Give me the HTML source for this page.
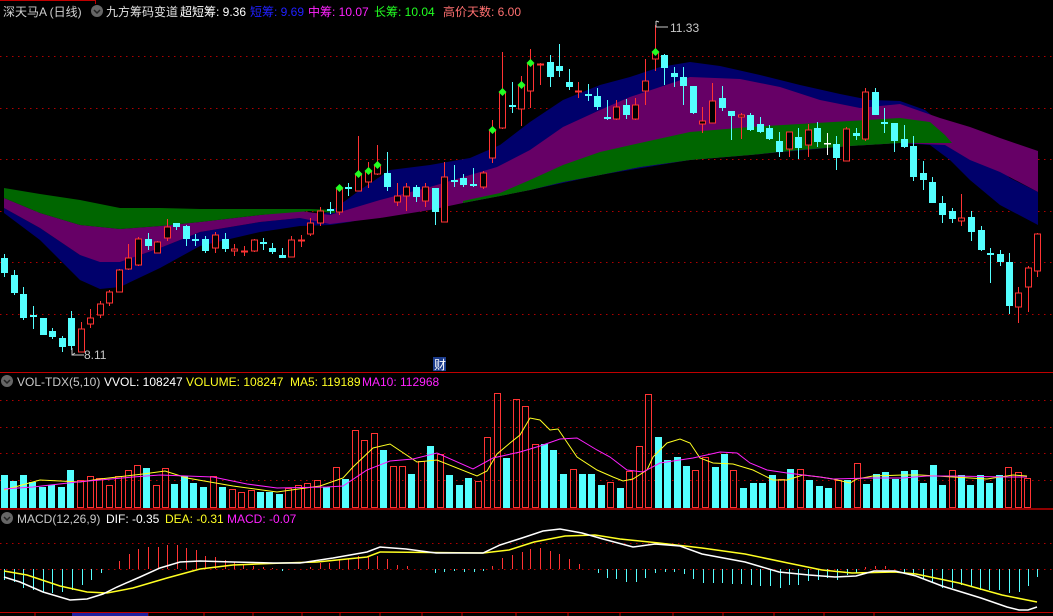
<!DOCTYPE html>
<html><head><meta charset="utf-8"><style>
html,body{margin:0;padding:0;background:#000;width:1053px;height:616px;overflow:hidden}
svg{display:block}
text{font-family:"Liberation Sans","Noto Sans CJK SC",sans-serif;font-size:12px}
</style></head><body>
<svg width="1053" height="616" viewBox="0 0 1053 616" xmlns="http://www.w3.org/2000/svg">
<rect width="1053" height="616" fill="#000"/>
<!-- frame lines -->
<line x1="0" y1="0.5" x2="96" y2="0.5" stroke="#c00000"/>
<line x1="95.5" y1="0" x2="95.5" y2="4" stroke="#c00000"/>
<line x1="0" y1="372.5" x2="1053" y2="372.5" stroke="#c00000"/>
<line x1="0" y1="509" x2="1053" y2="509" stroke="#c00000" stroke-width="1.5"/>
<line x1="0" y1="612.5" x2="1053" y2="612.5" stroke="#c00000"/>
<!-- grid dotted -->
<g stroke="#b00000" stroke-dasharray="1.5 4.5">
<line x1="0" y1="56.5" x2="1053" y2="56.5"/><line x1="0" y1="108.5" x2="1053" y2="108.5"/>
<line x1="0" y1="159.5" x2="1053" y2="159.5"/><line x1="0" y1="211.5" x2="1053" y2="211.5"/>
<line x1="0" y1="262.5" x2="1053" y2="262.5"/><line x1="0" y1="314.5" x2="1053" y2="314.5"/>
<line x1="0" y1="400.5" x2="1053" y2="400.5"/><line x1="0" y1="427.5" x2="1053" y2="427.5"/>
<line x1="0" y1="453.5" x2="1053" y2="453.5"/><line x1="0" y1="480.5" x2="1053" y2="480.5"/>
<line x1="0" y1="543.5" x2="1053" y2="543.5"/><line x1="0" y1="569.5" x2="1053" y2="569.5"/>
</g>
<!-- bands -->
<polygon fill="#00006b" points="4,208 40,228 80,255 120,262 160,248 200,232 260,222 300,218 330,212 360,190 390,170 430,165 470,158 500,145 530,122 563,100 600,85 630,77 660,67 690,62 720,66 760,75 800,85 840,94 870,100 900,101 925,110 950,130 980,152 1010,178 1038,192 1038,225 1000,205 970,180 950,160 930,145 900,143 850,146 750,155 690,160 600,175 530,190 463,203 400,210 350,222 330,225 300,226 260,232 200,246 160,268 120,287 100,289 80,280 40,240 4,213"/>
<polygon fill="#660066" points="4,198 40,213 80,225 120,229 160,226 200,222 260,215 300,211 330,215 380,200 430,187 497,167 530,150 563,127 600,110 630,97 690,77 740,79 780,87 820,100 860,108 900,104 940,118 970,127 1000,138 1038,151 1038,192 1000,172 970,160 945,145 900,143 850,146 800,150 750,155 690,160 640,167 600,175 563,182 530,190 500,196 463,203 430,210 380,218 330,224 300,218 260,222 200,232 160,248 120,262 100,262 80,255 40,228 4,208"/>
<polygon fill="#006600" points="4,188 40,194 80,200 120,208 160,208 200,209 260,209 310,209 335,210 335,213 310,211 260,215 200,222 160,226 120,229 80,225 40,213 4,198"/>
<polygon fill="#006600" points="463,201 500,193 530,180 563,165 600,152 640,143 690,132 750,127 800,124 850,121 900,118 930,122 945,135 952,143 900,143 850,146 800,150 750,155 690,160 640,167 600,175 563,182 530,190 500,196 463,203"/>
<!-- candles -->
<g transform="translate(0.5,0)" shape-rendering="crispEdges">
<path stroke="#54ffff" fill="none" d="M4 254V277M14 270V295M23 287V320M33 306V329M43 318V335M52 328V339M62 336V352M71 311V350M148 233V250M176 223V230M186 225V246M195 234V246M205 236V253M225 233V252M263 238V250M272 243V254M282 248V258M330 202V214M348 183V196M387 152V191M416 185V202M435 188V225M454 165V187M463 174V187M473 168V187M512 82V113M550 55V87M559 44V77M569 69V90M588 84V101M597 88V110M607 100V120M626 99V119M664 54V85M674 67V87M683 67V105M693 86V114M722 86V111M731 111V140M750 113V131M760 117V133M769 125V140M779 132V157M798 128V159M817 122V147M836 136V170M856 128V140M875 88V115M884 108V133M894 125V152M904 125V148M913 136V181M923 161V190M932 177V203M942 196V223M952 208V223M971 211V241M981 226V251M990 248V283M1000 250V266M1009 253V314"/>
<g fill="#54ffff">
<rect x="0.5" y="258" width="7" height="15"/><rect x="10.5" y="275" width="7" height="18"/><rect x="19.5" y="294" width="7" height="24"/><rect x="29.5" y="315" width="7" height="2"/><rect x="39.5" y="318" width="7" height="17"/><rect x="48.5" y="331" width="7" height="6"/><rect x="58.5" y="338" width="7" height="9"/><rect x="67.5" y="318" width="7" height="28"/><rect x="144.5" y="239" width="7" height="7"/><rect x="172.5" y="223" width="7" height="4"/><rect x="182.5" y="226" width="7" height="13"/><rect x="191.5" y="239" width="7" height="2"/><rect x="201.5" y="239" width="7" height="12"/><rect x="221.5" y="239" width="7" height="10"/><rect x="259.5" y="242" width="7" height="2"/><rect x="268.5" y="248" width="7" height="4"/><rect x="278.5" y="255" width="7" height="3"/><rect x="326.5" y="209" width="7" height="2"/><rect x="344.5" y="187" width="7" height="2"/><rect x="383.5" y="173" width="7" height="14"/><rect x="412.5" y="187" width="7" height="10"/><rect x="431.5" y="188" width="7" height="24"/><rect x="450.5" y="180" width="7" height="2"/><rect x="459.5" y="178" width="7" height="7"/><rect x="469.5" y="184" width="7" height="2"/><rect x="508.5" y="105" width="7" height="2"/><rect x="546.5" y="62" width="7" height="15"/><rect x="555.5" y="66" width="7" height="5"/><rect x="565.5" y="82" width="7" height="5"/><rect x="584.5" y="94" width="7" height="2"/><rect x="593.5" y="96" width="7" height="11"/><rect x="603.5" y="117" width="7" height="2"/><rect x="622.5" y="105" width="7" height="10"/><rect x="660.5" y="55" width="7" height="13"/><rect x="670.5" y="73" width="7" height="4"/><rect x="679.5" y="77" width="7" height="9"/><rect x="689.5" y="86" width="7" height="27"/><rect x="718.5" y="98" width="7" height="10"/><rect x="727.5" y="111" width="7" height="5"/><rect x="746.5" y="115" width="7" height="15"/><rect x="756.5" y="124" width="7" height="8"/><rect x="765.5" y="128" width="7" height="11"/><rect x="775.5" y="141" width="7" height="11"/><rect x="794.5" y="137" width="7" height="11"/><rect x="813.5" y="128" width="7" height="14"/><rect x="832.5" y="144" width="7" height="14"/><rect x="852.5" y="133" width="7" height="3"/><rect x="871.5" y="92" width="7" height="23"/><rect x="880.5" y="122" width="7" height="2"/><rect x="890.5" y="123" width="7" height="18"/><rect x="900.5" y="139" width="7" height="8"/><rect x="909.5" y="146" width="7" height="31"/><rect x="919.5" y="173" width="7" height="7"/><rect x="928.5" y="182" width="7" height="21"/><rect x="938.5" y="203" width="7" height="12"/><rect x="948.5" y="211" width="7" height="8"/><rect x="967.5" y="217" width="7" height="15"/><rect x="977.5" y="230" width="7" height="20"/><rect x="986.5" y="253" width="7" height="2"/><rect x="996.5" y="254" width="7" height="8"/><rect x="1005.5" y="262" width="7" height="44"/>
</g>
<path stroke="#fff" d="M827 133V155"/><rect x="823.5" y="143" width="7" height="1.5" fill="#fff"/>
<path stroke="#ff3333" fill="none" d="M81 322V352M90 309V328M100 301V318M109 290V306M119 269V292M128 244V270M138 237V266M157 241V253M167 219V241M215 232V253M234 244V256M244 246V256M254 239V252M291 236V257M301 235V247M310 218V236M320 207V226M339 188V215M358 136V191M368 162V188M377 145V175M397 183V206M406 183V211M425 183V207M444 162V222M483 171V189M492 120V163M502 52V129M521 76V126M530 49V108M540 63V85M578 82V98M616 100V120M635 98V120M645 59V105M655 25V71M702 107V133M712 83V123M741 113V139M789 132V157M808 124V157M846 127V161M865 88V141M961 194V226M1018 287V323M1028 266V312M1037 233V277"/>
<g fill="#000" stroke="#ff3333">
<rect x="78" y="329" width="6" height="23"/><rect x="87" y="318" width="6" height="6"/><rect x="97" y="304" width="6" height="11"/><rect x="106" y="292" width="6" height="11"/><rect x="116" y="270" width="6" height="22"/><rect x="125" y="258" width="6" height="11"/><rect x="135" y="239" width="6" height="26"/><rect x="154" y="242" width="6" height="11"/><rect x="164" y="227" width="6" height="11"/><rect x="212" y="235" width="6" height="13"/><rect x="231" y="249" width="6" height="2"/><rect x="241" y="251" width="6" height="1"/><rect x="251" y="240" width="6" height="11"/><rect x="288" y="240" width="6" height="17"/><rect x="298" y="240" width="6" height="1"/><rect x="307" y="223" width="6" height="11"/><rect x="317" y="211" width="6" height="12"/><rect x="336" y="189" width="6" height="23"/><rect x="355" y="174" width="6" height="17"/><rect x="365" y="171" width="6" height="11"/><rect x="374" y="165" width="6" height="9"/><rect x="394" y="196" width="6" height="6"/><rect x="403" y="187" width="6" height="9"/><rect x="422" y="187" width="6" height="14"/><rect x="441" y="177" width="6" height="45"/><rect x="480" y="173" width="6" height="14"/><rect x="489" y="130" width="6" height="28"/><rect x="499" y="92" width="6" height="36"/><rect x="518" y="85" width="6" height="24"/><rect x="527" y="63" width="6" height="28"/><rect x="537" y="64" width="6" height="1"/><rect x="575" y="91" width="6" height="1"/><rect x="613" y="107" width="6" height="12"/><rect x="632" y="105" width="6" height="14"/><rect x="642" y="81" width="6" height="10"/><rect x="652" y="52" width="6" height="7"/><rect x="699" y="121" width="6" height="3"/><rect x="709" y="101" width="6" height="22"/><rect x="738" y="115" width="6" height="2"/><rect x="786" y="132" width="6" height="17"/><rect x="805" y="130" width="6" height="15"/><rect x="843" y="129" width="6" height="32"/><rect x="862" y="92" width="6" height="47"/><rect x="958" y="218" width="6" height="3"/><rect x="1015" y="293" width="6" height="14"/><rect x="1025" y="268" width="6" height="19"/><rect x="1034" y="234" width="6" height="37"/>
</g>
</g>
<!-- diamonds -->
<g fill="#22ff22">
<polygon points="339.5,184 343.5,188 339.5,192 335.5,188"/><polygon points="358.5,170 362.5,174 358.5,178 354.5,174"/><polygon points="368.5,167 372.5,171 368.5,175 364.5,171"/><polygon points="377.5,161 381.5,165 377.5,169 373.5,165"/><polygon points="492.5,126 496.5,130 492.5,134 488.5,130"/><polygon points="502.5,88 506.5,92 502.5,96 498.5,92"/><polygon points="521.5,81 525.5,85 521.5,89 517.5,85"/><polygon points="530.5,59 534.5,63 530.5,67 526.5,63"/><polygon points="655.5,48 659.5,52 655.5,56 651.5,52"/>
</g>
<!-- annotations -->
<g stroke="#c8c8c8" fill="none"><path d="M72 348V355H84M72 355l3-2"/><path d="M656 21V27H668M656 21l3 1"/></g>
<text x="84" y="359" fill="#c8c8c8">8.11</text>
<text x="670" y="32" fill="#c8c8c8">11.33</text>
<rect x="433" y="357" width="13" height="14" fill="#1c3c8c"/>
<text x="434" y="369" fill="#fff" font-size="11">财</text>
<!-- header -->
<text x="3" y="16" fill="#d0d0d0">深天马A (日线)</text>
<circle cx="97" cy="11" r="6" fill="#666"/><path d="M94 10l3 3 3-3" stroke="#222" stroke-width="1.5" fill="none"/>
<text x="106" y="16" fill="#e0e0e0">九方筹码变道</text>
<text x="180" y="16" fill="#fff">超短筹: 9.36</text>
<text x="250" y="16" fill="#2020ff">短筹: 9.69</text>
<text x="308" y="16" fill="#ff22ff">中筹: 10.07</text>
<text x="374" y="16" fill="#22ff22">长筹: 10.04</text>
<text x="443" y="16" fill="#ff7070">高价天数: 6.00</text>
<!-- volume -->
<circle cx="7" cy="381" r="6" fill="#666"/><path d="M4 380l3 3 3-3" stroke="#222" stroke-width="1.5" fill="none"/>
<text x="17" y="386" fill="#c8c8c8">VOL-TDX(5,10)</text>
<text x="104" y="386" fill="#fff">VVOL: 108247</text>
<text x="186" y="386" fill="#ffff22">VOLUME: 108247</text>
<text x="290" y="386" fill="#ffff22">MA5: 119189</text>
<text x="362" y="386" fill="#ff22ff">MA10: 112968</text>
<g shape-rendering="crispEdges">
<g fill="#54ffff">
<rect x="1" y="475" width="7" height="33"/><rect x="10" y="481" width="7" height="27"/><rect x="20" y="475" width="7" height="33"/><rect x="29" y="482" width="7" height="26"/><rect x="39" y="487" width="7" height="21"/><rect x="48" y="485" width="7" height="23"/><rect x="58" y="487" width="7" height="21"/><rect x="67" y="470" width="7" height="38"/><rect x="143" y="468" width="7" height="40"/><rect x="171" y="484" width="7" height="24"/><rect x="181" y="476" width="7" height="32"/><rect x="190" y="483" width="7" height="25"/><rect x="200" y="487" width="7" height="21"/><rect x="219" y="487" width="7" height="21"/><rect x="257" y="492" width="7" height="16"/><rect x="266" y="492" width="7" height="16"/><rect x="276" y="494" width="7" height="14"/><rect x="323" y="487" width="7" height="21"/><rect x="342" y="479" width="7" height="29"/><rect x="380" y="450" width="7" height="58"/><rect x="408" y="474" width="7" height="34"/><rect x="427" y="446" width="7" height="62"/><rect x="446" y="475" width="7" height="33"/><rect x="456" y="485" width="7" height="23"/><rect x="465" y="478" width="7" height="30"/><rect x="503" y="458" width="7" height="50"/><rect x="541" y="444" width="7" height="64"/><rect x="550" y="450" width="7" height="58"/><rect x="560" y="474" width="7" height="34"/><rect x="579" y="474" width="7" height="34"/><rect x="588" y="474" width="7" height="34"/><rect x="598" y="485" width="7" height="23"/><rect x="617" y="488" width="7" height="20"/><rect x="655" y="437" width="7" height="71"/><rect x="664" y="460" width="7" height="48"/><rect x="674" y="457" width="7" height="51"/><rect x="683" y="466" width="7" height="42"/><rect x="712" y="467" width="7" height="41"/><rect x="721" y="454" width="7" height="54"/><rect x="740" y="488" width="7" height="20"/><rect x="750" y="483" width="7" height="25"/><rect x="759" y="483" width="7" height="25"/><rect x="769" y="475" width="7" height="33"/><rect x="787" y="469" width="7" height="39"/><rect x="806" y="480" width="7" height="28"/><rect x="816" y="486" width="7" height="22"/><rect x="825" y="488" width="7" height="20"/><rect x="844" y="480" width="7" height="28"/><rect x="863" y="484" width="7" height="24"/><rect x="873" y="474" width="7" height="34"/><rect x="882" y="472" width="7" height="36"/><rect x="892" y="479" width="7" height="29"/><rect x="901" y="471" width="7" height="37"/><rect x="911" y="470" width="7" height="38"/><rect x="920" y="483" width="7" height="25"/><rect x="930" y="465" width="7" height="43"/><rect x="939" y="485" width="7" height="23"/><rect x="958" y="475" width="7" height="33"/><rect x="967" y="485" width="7" height="23"/><rect x="977" y="475" width="7" height="33"/><rect x="986" y="483" width="7" height="25"/><rect x="996" y="475" width="7" height="33"/>
</g>
<g fill="none" stroke="#ff3333">
<rect x="77.5" y="480.5" width="6" height="27"/><rect x="87.5" y="476.5" width="6" height="31"/><rect x="96.5" y="478.5" width="6" height="29"/><rect x="106.5" y="485.5" width="6" height="22"/><rect x="115.5" y="476.5" width="6" height="31"/><rect x="125.5" y="470.5" width="6" height="37"/><rect x="134.5" y="465.5" width="6" height="42"/><rect x="153.5" y="485.5" width="6" height="22"/><rect x="162.5" y="468.5" width="6" height="39"/><rect x="210.5" y="476.5" width="6" height="31"/><rect x="229.5" y="489.5" width="6" height="18"/><rect x="238.5" y="492.5" width="6" height="15"/><rect x="248.5" y="490.5" width="6" height="17"/><rect x="285.5" y="488.5" width="6" height="19"/><rect x="295.5" y="485.5" width="6" height="22"/><rect x="304.5" y="483.5" width="6" height="24"/><rect x="314.5" y="480.5" width="6" height="27"/><rect x="333.5" y="467.5" width="6" height="40"/><rect x="352.5" y="430.5" width="6" height="77"/><rect x="361.5" y="440.5" width="6" height="67"/><rect x="371.5" y="433.5" width="6" height="74"/><rect x="390.5" y="466.5" width="6" height="41"/><rect x="399.5" y="466.5" width="6" height="41"/><rect x="418.5" y="461.5" width="6" height="46"/><rect x="437.5" y="454.5" width="6" height="53"/><rect x="475.5" y="481.5" width="6" height="26"/><rect x="484.5" y="437.5" width="6" height="70"/><rect x="494.5" y="393.5" width="6" height="114"/><rect x="513.5" y="399.5" width="6" height="108"/><rect x="522.5" y="406.5" width="6" height="101"/><rect x="532.5" y="444.5" width="6" height="63"/><rect x="570.5" y="469.5" width="6" height="38"/><rect x="607.5" y="482.5" width="6" height="25"/><rect x="626.5" y="471.5" width="6" height="36"/><rect x="636.5" y="446.5" width="6" height="61"/><rect x="645.5" y="394.5" width="6" height="113"/><rect x="692.5" y="470.5" width="6" height="37"/><rect x="702.5" y="457.5" width="6" height="50"/><rect x="730.5" y="470.5" width="6" height="37"/><rect x="778.5" y="479.5" width="6" height="28"/><rect x="797.5" y="469.5" width="6" height="38"/><rect x="835.5" y="480.5" width="6" height="27"/><rect x="854.5" y="463.5" width="6" height="44"/><rect x="949.5" y="470.5" width="6" height="37"/><rect x="1005.5" y="467.5" width="6" height="40"/><rect x="1015.5" y="472.5" width="6" height="35"/><rect x="1024.5" y="478.5" width="6" height="29"/>
</g>
</g>
<polyline fill="none" stroke="#ffff22" points="4,490 40,480 80,482 100,479 143,474 165,471 187,478 233,486 277,492 320,486 343,478 353,467 373,448 390,444 417,462 437,460 477,476 487,471 497,454 510,443 520,435 530,418 540,420 550,430 558,429 577,457 597,470 613,477 623,481 633,479 647,470 653,457 667,443 680,439 690,443 700,458 713,463 733,464 753,470 773,480 787,480 803,475 820,477 833,479 850,483 857,479 873,476 903,475 920,475 953,477 987,479 1013,475 1027,476"/>
<polyline fill="none" stroke="#ff22ff" points="4,489 33,487 77,482 133,477 160,475 213,477 247,484 277,488 327,487 343,486 367,470 390,461 413,459 437,453 473,469 493,458 520,452 540,446 560,439 577,438 597,450 610,457 627,470 643,472 660,463 693,458 720,452 737,453 750,463 767,470 787,473 820,477 833,479 870,478 903,478 927,476 953,476 1007,477 1027,477"/>
<!-- MACD -->
<circle cx="7" cy="518" r="6" fill="#666"/><path d="M4 517l3 3 3-3" stroke="#222" stroke-width="1.5" fill="none"/>
<text x="17" y="523" fill="#c8c8c8">MACD(12,26,9)</text>
<text x="106" y="523" fill="#fff">DIF: -0.35</text>
<text x="165" y="523" fill="#ffff22">DEA: -0.31</text>
<text x="227" y="523" fill="#ff22ff">MACD: -0.07</text>
<g transform="translate(0.5,0)" shape-rendering="crispEdges">
<path stroke="#54ffff" d="M4 569V580M14 569V582M23 569V588M33 569V590M43 569V592M52 569V593M62 569V592M72 569V590M82 569V585M91 569V580M101 569V573M282 569V571M435 569V573M444 569V572M454 569V571M464 569V572M474 569V572M483 569V571M598 569V573M607 569V578M616 569V579M626 569V582M636 569V582M645 569V578M655 569V573M665 569V572M674 569V572M684 569V574M693 569V579M703 569V583M713 569V583M722 569V583M732 569V584M741 569V584M751 569V585M760 569V586M770 569V586M780 569V588M789 569V585M798 569V585M808 569V581M818 569V580M827 569V578M837 569V580M847 569V575M856 569V573M904 569V573M913 569V575M923 569V579M932 569V583M942 569V588M952 569V588M961 569V585M971 569V587M980 569V590M989 569V590M999 569V590M1009 569V593M1019 569V592M1028 569V586M1037 569V577"/>
<path stroke="#ff3333" d="M119 569V561M129 569V554M138 569V549M148 569V547M158 569V547M167 569V545M177 569V545M186 569V548M196 569V550M205 569V556M215 569V557M225 569V560M234 569V562M243 569V564M253 569V566M263 569V567M272 569V568M310 569V567M320 569V563M329 569V563M339 569V560M348 569V559M358 569V556M368 569V556M377 569V556M387 569V559M397 569V565M407 569V566M492 569V566M502 569V558M512 569V555M522 569V552M530 569V549M540 569V548M550 569V551M559 569V554M569 569V559M579 569V564M865 569V567M875 569V566M885 569V566"/>
</g>
<polyline fill="none" stroke="#ffff22" stroke-width="1.5" points="4,571 27,575 60,586 87,592 107,593 133,588 167,578 200,569 233,565 283,563 317,562 367,557 380,552 483,553 509,550 534,542 565,536 595,535 620,539 659,543 702,548 745,554 788,563 822,570 852,573 895,572 916,574 959,583 1002,595 1037,602"/>
<polyline fill="none" stroke="#fff" stroke-width="1.5" points="4,577 20,582 43,592 70,600 87,599 103,594 117,587 140,577 160,568 180,562 200,561 233,562 273,563 300,563 333,558 367,552 380,547 406,549 436,553 483,553 500,545 522,538 543,531 560,529 582,533 603,539 633,547 655,544 680,546 702,554 745,562 779,572 809,575 835,577 856,576 874,571 895,571 916,576 942,586 981,598 1007,607 1019,610 1028,610 1037,607"/>
<!-- axis ticks -->
<g stroke="#c00000"><path d="M35 612V616M148 612V616M204 612V616M253 612V616M302 612V616M340 612V616M380 612V616M422 612V616M462 612V616M516 612V616M568 612V616M620 612V616M673 612V616M723 612V616M774 612V616M824 612V616M874 612V616"/></g>
<rect x="72" y="613" width="76" height="3" fill="#2020a0"/>
</svg>
</body></html>
